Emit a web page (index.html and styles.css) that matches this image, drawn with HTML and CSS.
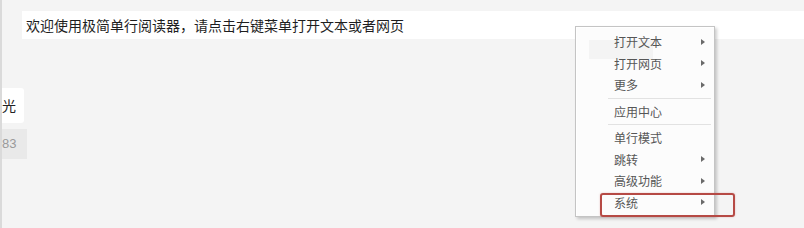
FILE: index.html
```html
<!DOCTYPE html>
<html lang="zh-CN">
<head>
<meta charset="utf-8">
<title>极简单行阅读器</title>
<link rel="stylesheet" href="styles.css">
</head>
<body>
<div class="frame">
  <div class="edge"></div>
  <div class="content">
    <div class="banner">欢迎使用极简单行阅读器，请点击右键菜单打开文本或者网页</div>
    <div class="side">
      <div class="side-word">光</div>
      <div class="side-num">83</div>
    </div>
  </div>
</div>

<div class="menu">
  <div class="ghost"></div>
  <div class="item"><span>打开文本</span><i class="arrow"></i></div>
  <div class="item"><span>打开网页</span><i class="arrow"></i></div>
  <div class="item"><span>更多</span><i class="arrow"></i></div>
  <div class="sep"></div>
  <div class="item"><span>应用中心</span></div>
  <div class="sep"></div>
  <div class="item"><span>单行模式</span></div>
  <div class="item"><span>跳转</span><i class="arrow"></i></div>
  <div class="item"><span>高级功能</span><i class="arrow"></i></div>
  <div class="item"><span>系统</span><i class="arrow"></i></div>
</div>
<div class="highlight"></div>
</body>
</html>
```

FILE: styles.css
```css
html, body {
  margin: 0;
  padding: 0;
}
body {
  width: 804px;
  height: 228px;
  overflow: hidden;
  background: #f4f4f4;
  font-family: "Noto Sans CJK SC", "Noto Sans", sans-serif;
  position: relative;
}
.frame {
  display: flex;
  height: 228px;
}
.edge {
  width: 2px;
  background: #dadada;
}
.content {
  flex: 1;
  padding-top: 11px;
  display: flex;
  flex-direction: column;
}
.banner {
  margin-left: 20px;
  height: 28px;
  line-height: 28px;
  background: #fff;
  padding-left: 4px;
  font-size: 14px;
  color: #1e1e1e;
  white-space: nowrap;
}
.side {
  margin-top: 49px;
  display: flex;
  flex-direction: column;
  align-items: flex-start;
  gap: 6px;
}
.side-word {
  width: 21px;
  height: 35px;
  background: #fff;
  border-radius: 0 3px 3px 0;
  font-size: 14px;
  line-height: 35px;
  color: #222;
  overflow: hidden;
  display: flex;
  justify-content: flex-end;
  padding-right: 1px;
  direction: rtl;
}
.side-num {
  width: 25px;
  height: 30px;
  background: #e9e9e9;
  font-family: "Liberation Sans", sans-serif;
  font-size: 13px;
  line-height: 30px;
  color: #9a9a9a;
}
.menu {
  position: absolute;
  left: 575px;
  top: 26px;
  width: 138px;
  padding: 4px 0 3px;
  background: #fcfcfc;
  border: 1px solid #c4c4c4;
  box-shadow: inset 1px 1px 0 #fff, 2px 2px 3px rgba(0, 0, 0, 0.2);
}
.ghost {
  position: absolute;
  left: 13px;
  top: 13px;
  width: 64px;
  height: 19px;
  background: #efefef;
  opacity: 0.6;
}
.item {
  position: relative;
  height: 21.5px;
  display: flex;
  align-items: center;
  justify-content: space-between;
  padding-left: 38px;
  padding-right: 9px;
  font-size: 12px;
  color: #565656;
}
.arrow {
  width: 0;
  height: 0;
  border-top: 3.5px solid transparent;
  border-bottom: 3.5px solid transparent;
  border-left: 4px solid #6a6a6a;
}
.sep {
  height: 5px;
  display: flex;
  align-items: center;
  padding-left: 32px;
  padding-right: 3px;
}
.sep::before {
  content: "";
  flex: 1;
  height: 1px;
  background: #e2e2e2;
}
.highlight {
  position: absolute;
  left: 600px;
  top: 193px;
  width: 131px;
  height: 20px;
  border: 2px solid #b64a45;
  border-radius: 3px;
  box-shadow: 0 0 2px rgba(182, 74, 69, 0.35);
}
```
